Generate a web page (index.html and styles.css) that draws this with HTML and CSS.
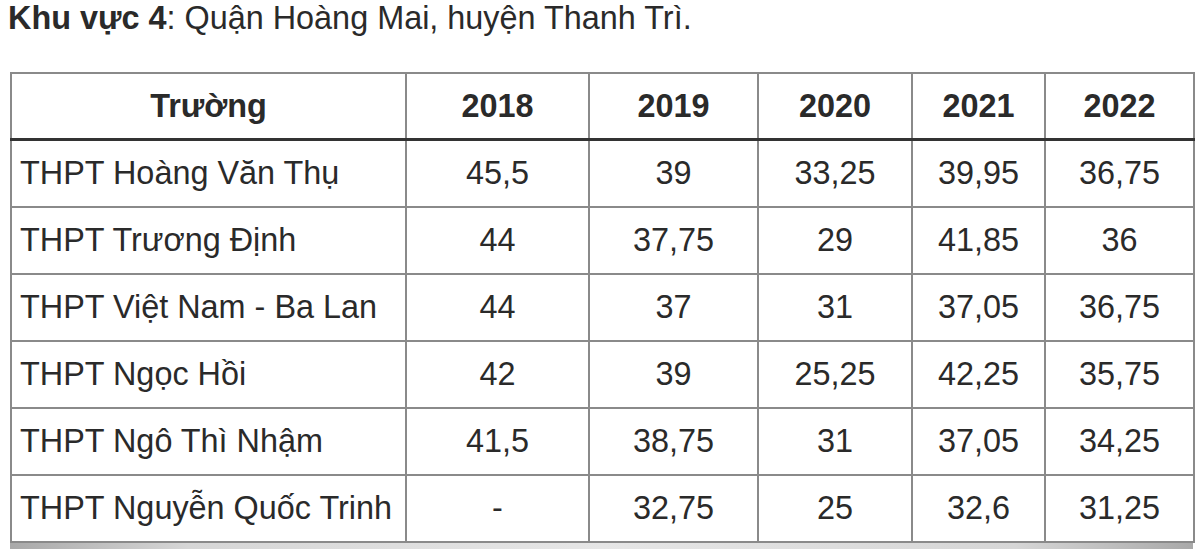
FILE: index.html
```html
<!DOCTYPE html>
<html lang="vi">
<head>
<meta charset="utf-8">
<link rel="stylesheet" href="styles.css">
</head>
<body>
<p class="title"><b>Khu vực 4</b>: Quận Hoàng Mai, huyện Thanh Trì.</p>
<div class="wrap">
<table class="scores">
<colgroup>
<col class="c-name"><col class="c-18"><col class="c-19"><col class="c-20"><col class="c-21"><col class="c-22">
</colgroup>
<thead>
<tr><th>Trường</th><th>2018</th><th>2019</th><th>2020</th><th>2021</th><th>2022</th></tr>
</thead>
<tbody>
<tr><td>THPT Hoàng Văn Thụ</td><td>45,5</td><td>39</td><td>33,25</td><td>39,95</td><td>36,75</td></tr>
<tr><td>THPT Trương Định</td><td>44</td><td>37,75</td><td>29</td><td>41,85</td><td>36</td></tr>
<tr><td>THPT Việt Nam - Ba Lan</td><td>44</td><td>37</td><td>31</td><td>37,05</td><td>36,75</td></tr>
<tr><td>THPT Ngọc Hồi</td><td>42</td><td>39</td><td>25,25</td><td>42,25</td><td>35,75</td></tr>
<tr><td>THPT Ngô Thì Nhậm</td><td>41,5</td><td>38,75</td><td>31</td><td>37,05</td><td>34,25</td></tr>
<tr><td>THPT Nguyễn Quốc Trinh</td><td>-</td><td>32,75</td><td>25</td><td>32,6</td><td>31,25</td></tr>
</tbody>
</table>
<div class="shade"></div>
</div>
</body>
</html>
```
FILE: styles.css
```css
html, body {
  margin: 0;
  padding: 0;
  background: #fff;
}
body {
  font-family: "Liberation Sans", Arial, sans-serif;
  color: #2a2a2a;
}
.title {
  margin: 0;
  padding-left: 8px;
  font-size: 32.4px;
  line-height: 36px;
}
.title b {
  font-weight: bold;
}
.wrap {
  margin: 36px 0 0 10px;
  width: 1183px;
}
.scores {
  width: 1183px;
  table-layout: fixed;
  border-collapse: collapse;
  font-size: 32.4px;
  border: 2px solid #7a7a7a;
}
.c-name { width: 395px; }
.c-18 { width: 183px; }
.c-19 { width: 169px; }
.c-20 { width: 154px; }
.c-21 { width: 133px; }
.c-22 { width: 149px; }
.scores th, .scores td {
  border: 2px solid #8a8a8a;
  text-align: center;
  vertical-align: middle;
  padding: 0 8px;
  height: 65px;
  white-space: nowrap;
}
.scores th {
  font-weight: bold;
  height: 64px;
  border-bottom: 3px solid #333;
}
.scores td:first-child {
  text-align: left;
  padding-left: 8px;
}
.shade {
  height: 8px;
  background: linear-gradient(to right, #a9a9a9 0%, #d6d6d6 15%, #e6e6e6 50%, #d6d6d6 85%, #a9a9a9 100%);
}
```
